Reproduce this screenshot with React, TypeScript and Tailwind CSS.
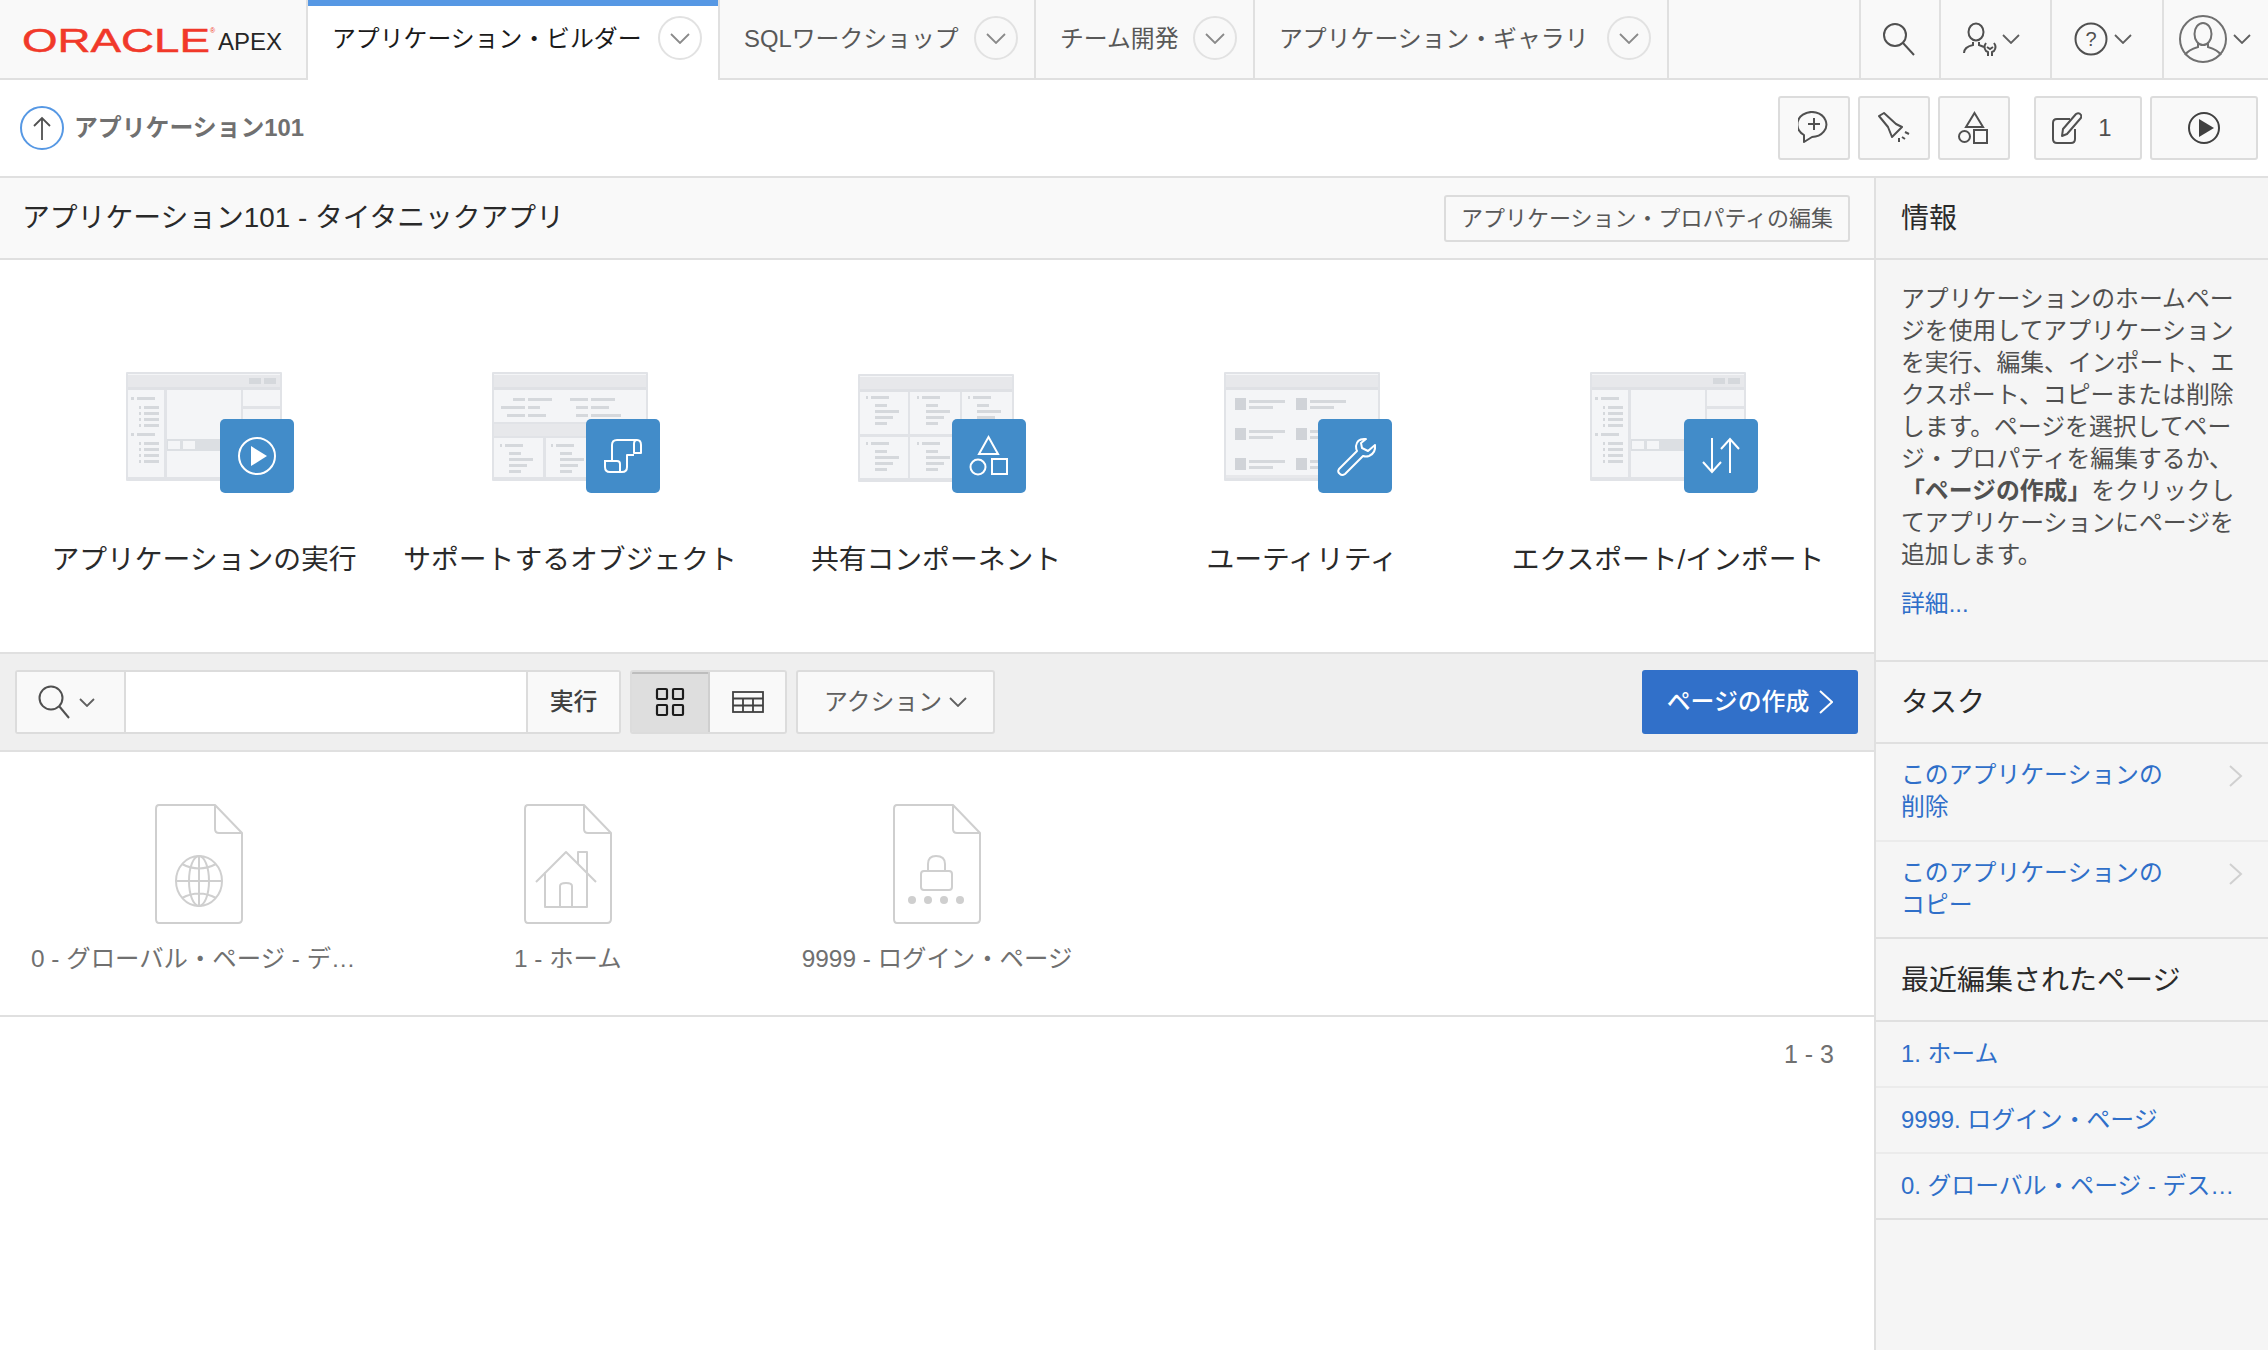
import type { ReactNode } from "react";

const Chev = ({ w = 18, h = 10, color = "#606060" }: { w?: number; h?: number; color?: string }) => (
  <svg width={w} height={h} viewBox={`0 0 ${w} ${h}`} fill="none" stroke={color} strokeWidth="1.8">
    <polyline points={`1,1 ${w / 2},${h - 1} ${w - 1},1`} />
  </svg>
);

function Tab({ label, width, active }: { label: string; width: string; active?: boolean }) {
  return (
    <div
      className={`${width} shrink-0 flex items-center justify-between pl-[24px] pr-[16px] border-r-2 border-[#e0e0e0] ${
        active ? "pb-[4px] bg-white text-[#1a1a1a] shadow-[inset_0_6px_0_#5698e4]" : "pb-[2px] border-b-2 text-[#585858]"
      }`}
    >
      <span className="pt-[2px] whitespace-nowrap">{label}</span>
      <span className="w-[44px] h-[44px] rounded-full border-2 border-[#e2e2e2] flex items-center justify-center">
        <Chev color="#8a8a8a" w={20} h={11} />
      </span>
    </div>
  );
}

function Cell({ width, children }: { width: string; children: ReactNode }) {
  return (
    <div className={`${width} shrink-0 h-full border-l-2 border-b-2 border-[#e0e0e0] flex items-center justify-center`}>
      {children}
    </div>
  );
}

function ToolBtn({ width, children, className = "" }: { width: string; children: ReactNode; className?: string }) {
  return (
    <div className={`${width} h-[64px] rounded-[3px] border-2 border-[#dcdcdc] bg-[#f9f9f9] flex items-center justify-center ${className}`}>
      {children}
    </div>
  );
}

type Box = [number, number, number, number];

const Rects = ({ items, fill }: { items: Box[]; fill: string }) => (
  <g fill={fill}>
    {items.map(([x, y, w, h], i) => (
      <rect key={i} x={x} y={y} width={w} height={h} />
    ))}
  </g>
);

const treeBars: Box[] = [
  [5, 25, 3, 3], [11, 25, 18, 3],
  [13, 34, 2, 3], [18, 34, 15, 3], [13, 40, 2, 3], [18, 40, 15, 3], [13, 46, 2, 3], [18, 46, 15, 3], [13, 52, 2, 3], [18, 52, 15, 3],
  [5, 61, 3, 3], [11, 61, 18, 3],
  [13, 70, 2, 3], [18, 70, 15, 3], [13, 76, 2, 3], [18, 76, 15, 3], [13, 82, 2, 3], [18, 82, 15, 3], [13, 88, 2, 3], [18, 88, 15, 3],
];

const listBars = (x: number, y: number): Box[] => [
  [x, y, 2, 3], [x + 5, y, 18, 3],
  [x + 9, y + 8, 12, 3], [x + 9, y + 14, 24, 3], [x + 9, y + 20, 18, 3], [x + 9, y + 26, 12, 3],
];

function WindowFrame({ children, h = 109 }: { children: ReactNode; h?: number }) {
  return (
    <g>
      <rect x="0" y="0" width="156" height={h} rx="1" fill="#e1e3e7" />
      <rect x="2" y="2" width="152" height={h - 6} fill="#f4f5f7" />
      <rect x="2" y="3" width="152" height="13" fill="#e7e8eb" />
      <rect x="2" y="15" width="152" height="3" fill="#dfe1e5" />
      {children}
    </g>
  );
}

const DashWindow = () => (
  <WindowFrame>
    <Rects items={[[123, 6, 12, 6], [138, 6, 12, 6]]} fill="#d5d8dc" />
    <Rects items={[[38, 18, 3, 88], [115, 18, 2, 49], [117, 34, 37, 3]]} fill="#e1e3e7" />
    <rect x="41" y="67" width="113" height="12" fill="#dcdfe3" />
    <Rects items={[[42, 69, 12, 8], [57, 69, 12, 8]]} fill="#f4f5f7" />
    <Rects items={treeBars} fill="#d5d8dc" />
  </WindowFrame>
);

const ObjectsWindow = () => (
  <WindowFrame>
    <rect x="2" y="51" width="152" height="14" fill="#e7e8eb" />
    <Rects items={[[2, 50, 152, 2], [2, 64, 152, 2], [51, 66, 3, 40], [104, 66, 3, 40]]} fill="#e1e3e7" />
    <Rects
      items={[
        [21, 26, 12, 3], [36, 26, 24, 3], [78, 26, 18, 3], [99, 26, 24, 3],
        [9, 34, 24, 3], [36, 34, 12, 3], [84, 34, 12, 3], [99, 34, 18, 3],
        [15, 42, 18, 3], [36, 42, 18, 3], [84, 42, 12, 3], [99, 42, 30, 3],
        ...listBars(8, 72), ...listBars(59, 72),
      ]}
      fill="#d5d8dc"
    />
  </WindowFrame>
);

const GridWindow = () => (
  <g transform="translate(0 2)">
    <WindowFrame h={108}>
      <Rects items={[[50, 18, 2, 87], [102, 18, 2, 87], [2, 60, 152, 3]]} fill="#e1e3e7" />
      <Rects items={[...listBars(8, 22), ...listBars(59, 22), ...listBars(110, 22), ...listBars(8, 68), ...listBars(59, 68), ...listBars(110, 68)]} fill="#d5d8dc" />
    </WindowFrame>
  </g>
);

const UtilWindow = () => (
  <WindowFrame>
    <rect x="2" y="103" width="152" height="3" fill="#e7e8eb" />
    {[26, 56, 86].map((y) => (
      <g key={y}>
        <Rects items={[[11, y, 11, 12], [72, y, 11, 12]]} fill="#d0d3d8" />
        <Rects items={[[25, y + 2, 36, 3], [25, y + 8, 24, 3], [86, y + 2, 36, 3], [86, y + 8, 24, 3]]} fill="#d5d8dc" />
      </g>
    ))}
  </WindowFrame>
);

const tileStroke = { fill: "none", stroke: "white", strokeWidth: 2 };

const TilePlay = () => (
  <g>
    <circle cx="131" cy="84" r="18" {...tileStroke} />
    <polygon points="125,74 125,94 141,84" fill="white" />
  </g>
);
const TileScroll = () => (
  <g {...tileStroke} strokeLinejoin="round">
    <path d="M120 89 V73 q0 -5 5 -5 h20 q4 0 4 5 v8 h-7 v-9 q0 -4 3 -4" />
    <path d="M120 89 h-7 v6 q0 5 5 5 h12 q5 0 5 -5 V83 h7" />
    <path d="M112 89 h13 q3 0 3 3 v8" />
  </g>
);
const TileShapes = () => (
  <g {...tileStroke}>
    <polygon points="130.5,65 140,82 121,82" />
    <circle cx="120" cy="95" r="7.5" />
    <rect x="134" y="87" width="15" height="15" />
  </g>
);
const TileWrench = () => (
  <g {...tileStroke} strokeLinejoin="round">
    <path d="M142 67 q-9 -1 -10 7 q0 3 1 5 l-18 18 q-2 3 1 5 q2 2 5 0 l18 -18 q3 1 6 0 q7 -3 6 -11 l-7 6 l-6 -3 l-1 -5 z" />
  </g>
);
const TileTransfer = () => (
  <g {...tileStroke}>
    <path d="M122 66 V99 M113 90 l9 10 l9 -10" />
    <path d="M140 101 V67 M131 77 l9 -10 l9 10" />
  </g>
);

function Illustration({ win, tile }: { win: ReactNode; tile: ReactNode }) {
  return (
    <svg width="168" height="122" viewBox="0 0 168 122" className="ml-[12px] block">
      {win}
      <rect x="94" y="47" width="74" height="74" rx="5" fill="#428cc9" />
      {tile}
    </svg>
  );
}

const cards = [
  { label: "アプリケーションの実行", win: <DashWindow />, tile: <TilePlay /> },
  { label: "サポートするオブジェクト", win: <ObjectsWindow />, tile: <TileScroll /> },
  { label: "共有コンポーネント", win: <GridWindow />, tile: <TileShapes /> },
  { label: "ユーティリティ", win: <UtilWindow />, tile: <TileWrench /> },
  { label: "エクスポート/インポート", win: <DashWindow />, tile: <TileTransfer /> },
];

const fileStroke = { fill: "none", stroke: "#cfcfcf", strokeWidth: 2 };

function FileIcon({ children }: { children: ReactNode }) {
  return (
    <svg width="88" height="120" viewBox="0 0 88 120" className="block">
      <g {...fileStroke} strokeLinejoin="round">
        <path d="M4 1 H60 L87 29 V115 q0 4 -4 4 H4 q-3 0 -3 -4 V5 q0 -4 3 -4 z" />
        <path d="M60 1 V25 q0 4 4 4 H87" />
        {children}
      </g>
    </svg>
  );
}

const pages = [
  {
    label: "0 - グローバル・ページ - デスクトップ",
    icon: (
      <g>
        <ellipse cx="44" cy="77" rx="23" ry="25" />
        <ellipse cx="44" cy="77" rx="10" ry="25" />
        <path d="M21 77 H67 M44 52 V102 M27 60 q17 9 34 0 M27 94 q17 -9 34 0" />
      </g>
    ),
  },
  {
    label: "1 - ホーム",
    icon: (
      <g>
        <path d="M12 78 L42 48 L72 78" />
        <path d="M21 68 V103 H63 V48 H54 V60" />
        <path d="M36 103 V82 q0 -3 6 -3 q6 0 6 3 V103" />
      </g>
    ),
  },
  {
    label: "9999 - ログイン・ページ",
    icon: (
      <g>
        <rect x="28" y="67" width="31" height="19" rx="3" />
        <path d="M35 67 V60 q0 -8 8 -8 q9 0 9 8 V67" />
        <g fill="#cfcfcf" stroke="none">
          <circle cx="19" cy="96" r="4" />
          <circle cx="35" cy="96" r="4" />
          <circle cx="51" cy="96" r="4" />
          <circle cx="67" cy="96" r="4" />
        </g>
      </g>
    ),
  },
];

function SideHead({ title, height }: { title: string; height: string }) {
  return (
    <div className={`${height} shrink-0 flex items-center pl-[25px] pt-[2px] border-b-2 border-[#e0e0e0] text-[28px] text-[#2a2a2a]`}>{title}</div>
  );
}

function TaskLink({ label, height, last }: { label: string; height: string; last?: boolean }) {
  return (
    <div className={`${height} shrink-0 flex justify-between pl-[25px] pr-[25px] pt-[15px] leading-[32px] text-[#2f6fc9] border-b-2 ${last ? "border-[#e0e0e0]" : "border-[#ebebeb]"}`}>
      <span className="w-[270px]">{label}</span>
      <svg width="14" height="22" viewBox="0 0 14 22" fill="none" stroke="#d0d0d0" strokeWidth="2" className="mt-[6px]">
        <polyline points="1,1 12,11 1,21" />
      </svg>
    </div>
  );
}

function RecentLink({ label, last }: { label: string; last?: boolean }) {
  return (
    <div className={`h-[66px] shrink-0 flex items-center pl-[25px] pr-[28px] text-[#2f6fc9] border-b-2 ${last ? "border-[#e0e0e0]" : "border-[#ebebeb]"}`}>
      <span className="truncate">{label}</span>
    </div>
  );
}

export default function App() {
  return (
    <div lang="ja" className="w-[2268px] h-[1350px] bg-white overflow-hidden flex flex-col text-[23.85px] font-['Liberation_Sans','Noto_Sans_CJK_JP',sans-serif]">
      {/* top nav */}
      <div className="h-[80px] shrink-0 flex bg-[#f9f9f9]">
        <div className="w-[308px] shrink-0 border-r-2 border-b-2 border-[#e0e0e0]">
          <svg width="300" height="78" viewBox="0 0 300 78" className="block">
            <text x="22" y="52" fontSize="33.5" fill="#f1392a" stroke="#f1392a" strokeWidth="0.5" textLength="188" lengthAdjust="spacingAndGlyphs" fontFamily="Liberation Sans">ORACLE</text>
            <text x="210" y="33" fontSize="7" fill="#f1392a" fontFamily="Liberation Sans">®</text>
            <text x="218" y="50" fontSize="24" fill="#262626" fontFamily="Liberation Sans">APEX</text>
          </svg>
        </div>
        <Tab active label="アプリケーション・ビルダー" width="w-[412px]" />
        <Tab label="SQLワークショップ" width="w-[316px]" />
        <Tab label="チーム開発" width="w-[219px]" />
        <Tab label="アプリケーション・ギャラリ" width="w-[414px]" />
        <div className="flex-1 border-b-2 border-[#e0e0e0]" />
        <Cell width="w-[80px]">
          <svg width="34" height="36" viewBox="0 0 34 36" fill="none" stroke="#505050" strokeWidth="2" className="mr-[2px]">
            <circle cx="13" cy="14" r="11" />
            <path d="M21 22 L32 34" />
          </svg>
        </Cell>
        <Cell width="w-[111px]">
          <div className="flex items-center gap-[4px] pr-[10px]">
            <svg width="36" height="36" viewBox="0 0 36 36" fill="none" stroke="#505050" strokeWidth="2">
              <ellipse cx="14" cy="11" rx="7.5" ry="8.5" />
              <path d="M2 32 q0 -6 9 -8 v-3 M17 21 v3 l5 2" />
              <path d="M24 22 q-3 4 0 8 l2 1 v4 M32 22 q3 4 0 8 l-2 1 v4 M25 26 l3 2 l3 -2" />
            </svg>
            <Chev />
          </div>
        </Cell>
        <Cell width="w-[112px]">
          <div className="flex items-center gap-[6px] pr-[8px]">
            <svg width="34" height="34" viewBox="0 0 34 34" fill="none" stroke="#505050" strokeWidth="2">
              <circle cx="17" cy="17" r="15.5" />
              <text x="17" y="24" textAnchor="middle" fontSize="20" fill="#505050" stroke="none" fontFamily="Liberation Sans">?</text>
            </svg>
            <Chev />
          </div>
        </Cell>
        <Cell width="w-[106px]">
          <div className="flex items-center gap-[6px] pr-[2px]">
            <svg width="48" height="48" viewBox="0 0 48 48" fill="none" stroke="#707070" strokeWidth="2">
              <circle cx="24" cy="24" r="23" />
              <ellipse cx="24" cy="19" rx="8.5" ry="11" />
              <path d="M19 28 v4 q-10 3 -13 8 M29 28 v4 q10 3 13 8" />
            </svg>
            <Chev />
          </div>
        </Cell>
      </div>

      {/* sub bar */}
      <div className="h-[98px] shrink-0 flex items-center pl-[20px] pr-[10px] border-b-2 border-[#e0e0e0]">
        <span className="w-[44px] h-[44px] rounded-full border-2 border-[#5698e4] flex items-center justify-center">
          <svg width="18" height="24" viewBox="0 0 18 24" fill="none" stroke="#505050" strokeWidth="1.8">
            <path d="M9 24 V2 M1 10 L9 2 L17 10" />
          </svg>
        </span>
        <span className="ml-[10px] font-bold text-[#707070]">アプリケーション101</span>
        <div className="flex-1" />
        <div className="flex gap-[8px]">
          <ToolBtn width="w-[72px]">
            <svg width="32" height="34" viewBox="0 0 32 34" fill="none" stroke="#505050" strokeWidth="2">
              <path d="M6 31 V24 A14.5 12.5 0 1 1 14 26 z" strokeLinejoin="round" />
              <path d="M16 7 V19 M10 13 H22" />
            </svg>
          </ToolBtn>
          <ToolBtn width="w-[72px]">
            <svg width="32" height="32" viewBox="0 0 32 32" fill="none" stroke="#505050" strokeWidth="2">
              <path d="M1 4 L6 1 L18 12 L24 15 L14 25 L10 15 z" strokeLinejoin="round" />
              <path d="M27 20 L31 22 M24 25 L27 27 M21 26 L21 30" />
            </svg>
          </ToolBtn>
          <ToolBtn width="w-[72px]">
            <svg width="32" height="34" viewBox="0 0 32 34" fill="none" stroke="#505050" strokeWidth="2">
              <polygon points="16.5,2 25,16 8,16" />
              <circle cx="6.5" cy="25.5" r="5.5" />
              <rect x="16" y="19" width="13" height="13" />
            </svg>
          </ToolBtn>
          <ToolBtn width="w-[108px]" className="ml-[16px] gap-[16px] pr-[12px]">
            <svg width="30" height="32" viewBox="0 0 30 32" fill="none" stroke="#505050" strokeWidth="2">
              <path d="M18 7 H5 q-4 0 -4 4 V27 q0 4 4 4 H19 q4 0 4 -4 V17" />
              <path d="M10 24 L11 17 L24 2 q3 -2 5 1 q1 2 -1 4 L15 22 z" strokeLinejoin="round" />
            </svg>
            <span className="text-[#505050]">1</span>
          </ToolBtn>
          <ToolBtn width="w-[108px]">
            <svg width="34" height="34" viewBox="0 0 34 34" fill="none" stroke="#404040" strokeWidth="2">
              <circle cx="17" cy="17" r="15" />
              <polygon points="12,8 12,26 27,17" fill="#404040" stroke="none" />
            </svg>
          </ToolBtn>
        </div>
      </div>

      <div className="flex-1 flex min-h-0">
        {/* main column */}
        <div className="w-[1874px] shrink-0 flex flex-col">
          <div className="h-[82px] shrink-0 flex items-center justify-between pl-[22px] pr-[24px] bg-[#f9f9f9] border-b-2 border-[#e0e0e0]">
            <span className="text-[27.8px] text-[#2a2a2a]">アプリケーション101 - タイタニックアプリ</span>
            <span className="h-[47px] w-[406px] flex items-center justify-center rounded-[3px] border-2 border-[#dcdcdc] bg-[#f9f9f9] text-[22px] text-[#585858] whitespace-nowrap">
              アプリケーション・プロパティの編集
            </span>
          </div>

          <div className="h-[392px] shrink-0 pl-[21px] pr-[23px] pt-[112px] grid grid-cols-5">
            {cards.map((c) => (
              <div key={c.label} className="flex flex-col items-center">
                <Illustration win={c.win} tile={c.tile} />
                <div className="mt-[46px] h-[40px] leading-[40px] text-[27.8px] text-[#2a2a2a] whitespace-nowrap">{c.label}</div>
              </div>
            ))}
          </div>

          <div className="h-[100px] shrink-0 flex items-center pl-[15px] pr-[16px] bg-[#efefef] border-y-2 border-[#e0e0e0]">
            <div className="w-[606px] h-[64px] flex rounded-[3px] border-2 border-[#dcdcdc] bg-white">
              <div className="w-[109px] flex items-center justify-center gap-[9px] pr-[8px] bg-[#f9f9f9] border-r-2 border-[#dcdcdc]">
                <svg width="32" height="34" viewBox="0 0 32 34" fill="none" stroke="#505050" strokeWidth="2">
                  <circle cx="13" cy="13" r="11.5" />
                  <path d="M21 21 L31 33" />
                </svg>
                <Chev w={16} h={9} />
              </div>
              <div className="flex-1" />
              <div className="w-[93px] flex items-center justify-center bg-[#f9f9f9] border-l-2 border-[#dcdcdc] font-medium text-[#404040]">実行</div>
            </div>
            <div className="ml-[9px] w-[157px] h-[64px] flex rounded-[3px] border-2 border-[#dcdcdc] overflow-hidden">
              <div className="w-[78px] flex items-center justify-center bg-[#dedede] border-r-2 border-[#cfcfcf] shadow-[inset_0_2px_0_#bdbdbd]">
                <svg width="30" height="30" viewBox="0 0 30 30" fill="none" stroke="#1c1c1c" strokeWidth="2.2">
                  <rect x="2" y="2" width="10" height="10" rx="1" />
                  <rect x="18" y="2" width="10" height="10" rx="1" />
                  <rect x="2" y="18" width="10" height="10" rx="1" />
                  <rect x="18" y="18" width="10" height="10" rx="1" />
                </svg>
              </div>
              <div className="flex-1 flex items-center justify-center bg-[#f9f9f9]">
                <svg width="32" height="22" viewBox="0 0 32 22" fill="none" stroke="#404040" strokeWidth="1.8">
                  <rect x="1" y="1" width="30" height="20" />
                  <path d="M1 7.5 H31 M1 14.5 H31 M11 7.5 V21 M21 7.5 V21" />
                </svg>
              </div>
            </div>
            <div className="ml-[9px] w-[199px] h-[64px] flex items-center justify-center gap-[7px] rounded-[3px] border-2 border-[#dcdcdc] bg-[#f9f9f9] text-[#606060]">
              アクション
              <Chev w={18} h={10} />
            </div>
            <div className="flex-1" />
            <div className="w-[216px] h-[64px] flex items-center justify-center gap-[10px] rounded-[3px] bg-[#3170c9] text-white font-medium">
              ページの作成
              <svg width="14" height="24" viewBox="0 0 14 24" fill="none" stroke="white" strokeWidth="2">
                <polyline points="1,1 13,12 1,23" />
              </svg>
            </div>
          </div>

          <div className="h-[265px] shrink-0 grid grid-cols-5 px-[14px] pt-[52px] border-b-2 border-[#e0e0e0] items-start">
            {pages.map((p) => (
              <div key={p.label} className="flex flex-col items-center px-[17px] min-w-0">
                <FileIcon>{p.icon}</FileIcon>
                <div className="mt-[18px] w-full text-center truncate text-[#707070] text-[24.4px] leading-[34px]">{p.label}</div>
              </div>
            ))}
          </div>

          <div className="flex justify-end pr-[40px] pt-[20px] text-[#707070] text-[25px] leading-[34px]">1 - 3</div>
        </div>

        {/* right column */}
        <div className="w-[394px] shrink-0 flex flex-col bg-[#f5f5f5] border-l-2 border-[#e0e0e0]">
          <SideHead title="情報" height="h-[82px]" />
          <div className="h-[402px] shrink-0 pl-[25px] pt-[23px] border-b-2 border-[#e0e0e0]">
            <p className="w-[340px] leading-[32px] text-[#505050]">
              アプリケーションのホームページを使用してアプリケーションを実行、編集、インポート、エクスポート、コピーまたは削除します。ページを選択してページ・プロパティを編集するか、
              <b className="font-bold">「ページの作成」</b>
              をクリックしてアプリケーションにページを追加します。
            </p>
            <p className="mt-[17px] leading-[32px] text-[#2f6fc9]">詳細...</p>
          </div>
          <SideHead title="タスク" height="h-[82px]" />
          <TaskLink label="このアプリケーションの削除" height="h-[98px]" />
          <TaskLink label="このアプリケーションのコピー" height="h-[97px]" last />
          <SideHead title="最近編集されたページ" height="h-[83px]" />
          <RecentLink label="1. ホーム" />
          <RecentLink label="9999. ログイン・ページ" />
          <RecentLink label="0. グローバル・ページ - デスクトップ" last />
        </div>
      </div>
    </div>
  );
}
